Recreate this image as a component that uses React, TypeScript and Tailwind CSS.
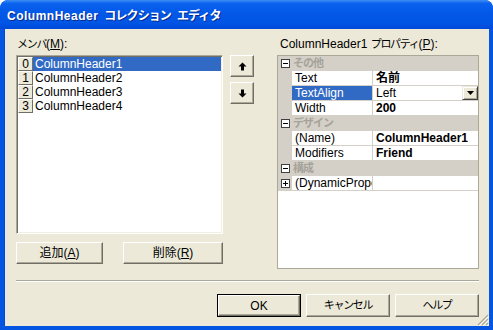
import type { ReactNode } from 'react'

const ui_font = "font-[family-name:'Liberation_Sans','Noto_Sans_CJK_JP',sans-serif]"

const members = ['ColumnHeader1', 'ColumnHeader2', 'ColumnHeader3', 'ColumnHeader4']

type GridRow =
  | { kind: 'category'; label: string }
  | {
      kind: 'prop'
      name: string
      value: string
      bold?: boolean
      selected?: boolean
      dropdown?: boolean
      expandable?: boolean
    }

const grid_rows: GridRow[] = [
  { kind: 'category', label: 'その他' },
  { kind: 'prop', name: 'Text', value: '名前', bold: true },
  { kind: 'prop', name: 'TextAlign', value: 'Left', selected: true, dropdown: true },
  { kind: 'prop', name: 'Width', value: '200', bold: true },
  { kind: 'category', label: 'デザイン' },
  { kind: 'prop', name: '(Name)', value: 'ColumnHeader1', bold: true },
  { kind: 'prop', name: 'Modifiers', value: 'Friend', bold: true },
  { kind: 'category', label: '構成' },
  { kind: 'prop', name: '(DynamicProperties)', value: '', expandable: true },
]

// kana in the old UI font run narrow, so squeeze them a bit
function Kana({ children }: { children: ReactNode }) {
  return <span className="text-[11px] tracking-[-1.3px]">{children}</span>
}

function ClassicButton({
  children,
  className = '',
  is_default = false,
}: {
  children: ReactNode
  className?: string
  is_default?: boolean
}) {
  const face = (
    <div className="flex h-full w-full items-center justify-center border border-t-white border-l-white border-r-[#716f64] border-b-[#716f64] bg-[#ece9d8] text-[12px] text-black shadow-[inset_-1px_-1px_0_#aca899]">
      {children}
    </div>
  )

  if (is_default) {
    return <div className={`border border-black ${className}`}>{face}</div>
  }

  return <div className={className}>{face}</div>
}

function BoxIcon({ plus = false }: { plus?: boolean }) {
  return (
    <svg width="9" height="9" viewBox="0 0 9 9" className="block">
      <rect x="0.5" y="0.5" width="8" height="8" fill="#fff" stroke="#404040" />
      <line x1="2" y1="4.5" x2="7" y2="4.5" stroke="#000" />
      {plus ? <line x1="4.5" y1="2" x2="4.5" y2="7" stroke="#000" /> : null}
    </svg>
  )
}

function ArrowIcon({ down = false }: { down?: boolean }) {
  return (
    <svg width="9" height="9" viewBox="0 0 9 9" className={down ? 'rotate-180' : ''}>
      <path d="M4.5 0.5 L8.5 4.5 L6 4.5 L6 8.5 L3 8.5 L3 4.5 L0.5 4.5 Z" fill="#000" />
    </svg>
  )
}

function PropertyGrid() {
  return (
    <div className="h-[214px] overflow-hidden border border-[#aca899] bg-white">
      {grid_rows.map((row, i) => {
        if (row.kind === 'category') {
          return (
            <div key={i} className="flex h-[15px] items-center bg-[#d4d0c8]">
              <div className="flex w-[14px] justify-center">
                <BoxIcon />
              </div>
              <span className="pl-[1px] text-[11px] leading-none font-bold tracking-[-1px] text-[#a5a29a]">
                {row.label}
              </span>
            </div>
          )
        }

        return (
          <div key={i} className="flex h-[15px]">
            <div className="flex w-[14px] items-center justify-center bg-[#d4d0c8]">
              {row.expandable ? <BoxIcon plus /> : null}
            </div>
            <div
              className={`flex w-[81px] items-center overflow-hidden border-r border-b border-[#d4d0c8] pl-[3px] whitespace-nowrap ${
                row.selected ? 'bg-[#316ac5] text-white' : 'text-black'
              }`}
            >
              {row.name}
            </div>
            <div className="flex flex-1 items-center border-b border-[#d4d0c8] pl-[3px]">
              <span className={row.bold ? 'font-bold' : ''}>{row.value}</span>
              {row.dropdown ? (
                <div className="ml-auto flex h-[14px] w-[16px] items-center justify-center border border-t-[#ece9d8] border-l-[#ece9d8] border-r-[#404040] border-b-[#404040] bg-[#ece9d8] shadow-[inset_1px_1px_0_#fff,inset_-1px_-1px_0_#aca899]">
                  <svg width="7" height="4" viewBox="0 0 7 4">
                    <path d="M0 0 H7 L3.5 4 Z" fill="#000" />
                  </svg>
                </div>
              ) : null}
            </div>
          </div>
        )
      })}
    </div>
  )
}

export default function App() {
  return (
    <div className={`h-[330px] w-[493px] overflow-hidden rounded-t-[8px] bg-[#0555e3] ${ui_font} text-[12px] leading-none`}>
      <div className="flex h-[29px] items-center gap-[6px] rounded-t-[8px] bg-[linear-gradient(to_bottom,#3d8ff5_0%,#0a62ee_12%,#0358e8_45%,#0055e5_80%,#0048d8_100%)] pt-[3px] pl-[7px] text-[12px] font-bold text-white [text-shadow:1px_1px_0_#0a2a8a]">
        <span className="tracking-[0.5px]">ColumnHeader</span>
        <span className="tracking-[-0.9px]">コレクション</span>
        <span className="tracking-[-0.9px]">エディタ</span>
      </div>

      <div className="relative mx-[4px] mb-[4px] flex h-[297px] flex-col border-l border-[#0a46d4] bg-[#ece9d8] pt-[9px] pr-[10px] pl-[11px]">
        <div className="flex items-start">
          <div className="flex w-[207px] flex-col">
            <div className="h-[17px] pl-[1px]">
              <Kana>メンバ</Kana>(<span className="underline">M</span>):
            </div>
            <div className="h-[179px] border border-t-[#aca899] border-l-[#aca899] border-r-white border-b-white bg-white p-[1px] shadow-[inset_1px_1px_0_#716f64,inset_-1px_-1px_0_#f1efe2]">
              {members.map((member, i) => (
                <div key={member} className="flex h-[14px]">
                  <div className="flex w-[15px] items-center justify-center border border-t-white border-l-white border-r-[#716f64] border-b-[#716f64] bg-[#ece9d8] text-black">
                    {i}
                  </div>
                  <div
                    className={`flex flex-1 items-center pl-[2px] ${
                      i === 0 ? 'bg-[#316ac5] text-white' : 'text-black'
                    }`}
                  >
                    {member}
                  </div>
                </div>
              ))}
            </div>
            <div className="mt-[8px] flex justify-between">
              <ClassicButton className="h-[22px] w-[87px]">
                追加(<span className="underline">A</span>)
              </ClassicButton>
              <ClassicButton className="h-[22px] w-[100px]">
                削除(<span className="underline">R</span>)
              </ClassicButton>
            </div>
          </div>

          <div className="mt-[17px] ml-[7px] flex w-[24px] flex-col gap-[5px]">
            <ClassicButton className="h-[22px] w-[24px]">
              <ArrowIcon />
            </ClassicButton>
            <ClassicButton className="h-[22px] w-[24px]">
              <ArrowIcon down />
            </ClassicButton>
          </div>

          <div className="ml-auto flex w-[202px] flex-col">
            <div className="h-[17px] pl-[3px]">
              ColumnHeader1 <Kana>プロパティ</Kana>(<span className="underline">P</span>):
            </div>
            <PropertyGrid />
          </div>
        </div>

        <div className="mt-[11px] h-[2px] border-t border-b border-t-[#aca899] border-b-white" />

        <div className="mt-[12px] flex justify-end gap-[5px]">
          <ClassicButton is_default className="h-[23px] w-[84px]">
            OK
          </ClassicButton>
          <ClassicButton className="h-[23px] w-[84px]">
            <Kana>キャンセル</Kana>
          </ClassicButton>
          <ClassicButton className="h-[23px] w-[84px]">
            <Kana>ヘルプ</Kana>
          </ClassicButton>
        </div>

        <svg width="12" height="12" viewBox="0 0 12 12" className="absolute right-0 bottom-0">
          <path d="M11 1 L1 11 M11 5 L5 11 M11 9 L9 11" stroke="#aca899" strokeWidth="1.2" />
          <path d="M12 2 L2 12 M12 6 L6 12 M12 10 L10 12" stroke="#fff" strokeWidth="1" />
        </svg>
      </div>
    </div>
  )
}
